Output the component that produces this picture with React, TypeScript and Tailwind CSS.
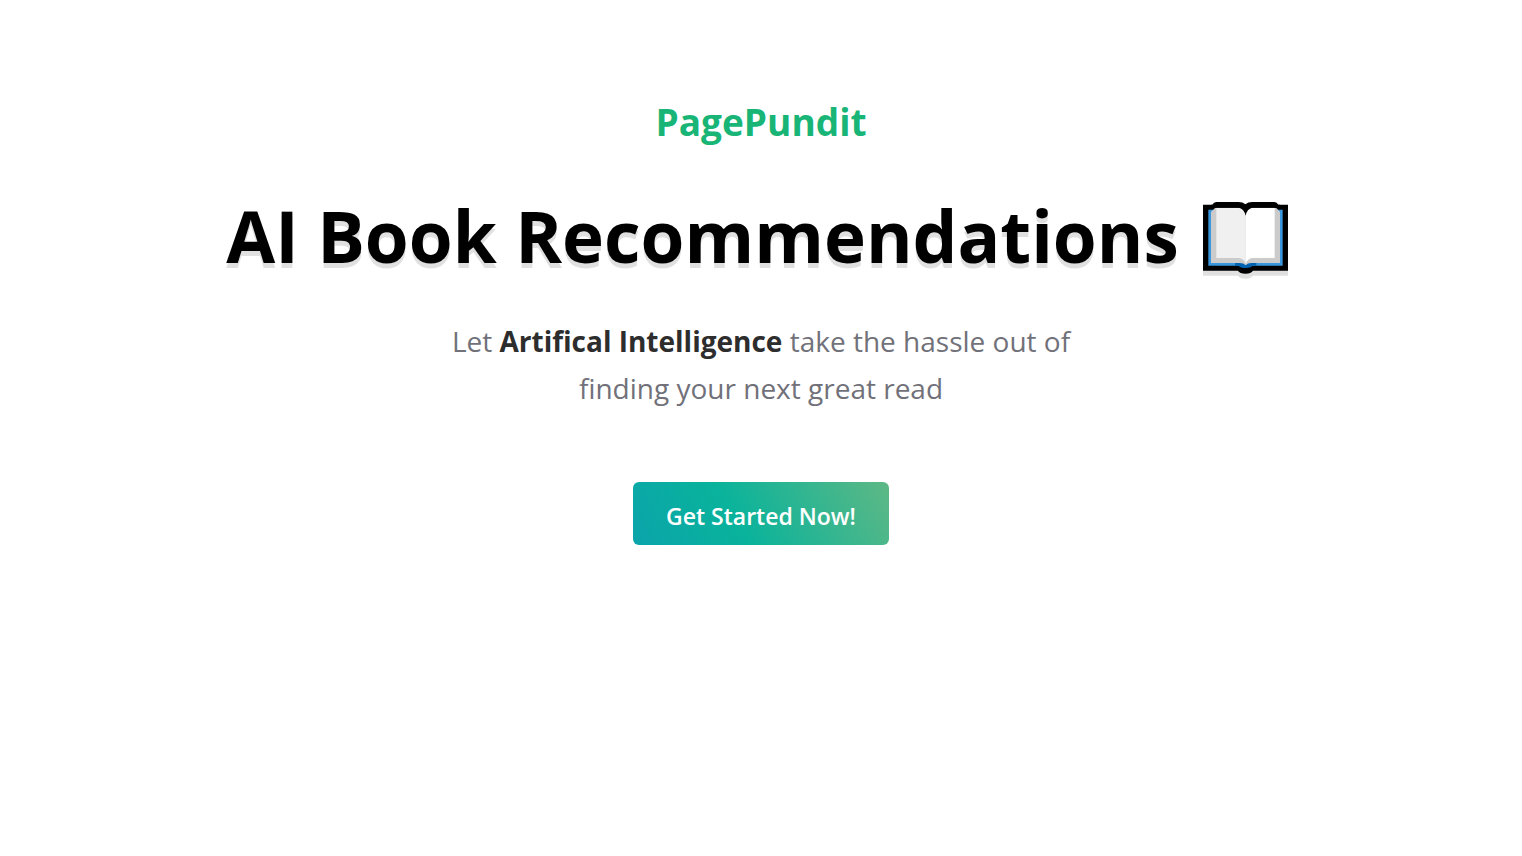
import React from 'react';

const BookIcon: React.FC = () => (
  <svg
    role="img"
    aria-label="Open book"
    viewBox="42 36 255 216"
    className="mt-1 mr-2 w-[85px] h-[72px] drop-shadow-[0_5px_0_rgba(0,0,0,0.12)]"
  >
    {/* Outline */}
    <path
      fill="#000"
      d="M42 44H70Q74 36 82 36H148Q162 36 169 43Q177 36 190 36H256Q264 36 268 44H297V242H192Q186 251 170 251Q152 251 147 242H42Z"
    />
    {/* Cover */}
    <path fill="#3a96dd" d="M58 59H281V227H58Z" />
    <path fill="#0063b1" d="M138 219H202V227H192Q184 234 170 234Q155 234 148 227H138Z" />
    {/* Page edges */}
    <path
      fill="#cbcbcb"
      d="M66 66L78 54H262L273 66V219H188Q176 219 170 226Q164 219 152 219H66Z"
    />
    {/* Pages */}
    <path fill="#f0f0f0" d="M82 53H148Q162 53 170 68V221Q163 204 148 204H82Z" />
    <path fill="#fff" d="M257 53H190Q177 53 170 68V221Q177 204 192 204H257Z" />
    <path fill="#000" d="M66 53H150Q165 56 170 77Q174 56 190 53H273V44H66Z" />
  </svg>
);

const App: React.FC = () => {
  return (
    <main className="min-h-screen bg-white px-6 py-24 text-center font-['Segoe_UI','Open_Sans','Noto_Sans',sans-serif]">
      <p className="text-[37px] leading-[52px] font-bold text-[#18b577]">PagePundit</p>

      <h1 className="mt-10 flex flex-wrap items-center justify-center gap-x-6 text-[71px] leading-[96px] font-bold text-black">
        <span className="[text-shadow:0_5px_0_rgba(0,0,0,0.12)]">AI Book Recommendations</span>
        <BookIcon />
      </h1>

      <p className="mx-auto mt-[34px] max-w-2xl text-[28px] leading-[47px] text-[#71717a]">
        Let <strong className="font-bold text-[#2d2d2d]">Artifical Intelligence</strong> take the hassle out of
        finding your next great read
      </p>

      <button
        type="button"
        className="mt-[70px] h-[63px] rounded-md bg-[linear-gradient(60deg,#0ba4ab_0%,#09b39b_40%,#5eb885_100%)] px-[33px] pt-1.5 text-[23px] font-semibold text-white"
      >
        Get Started Now!
      </button>
    </main>
  );
};

export default App;
